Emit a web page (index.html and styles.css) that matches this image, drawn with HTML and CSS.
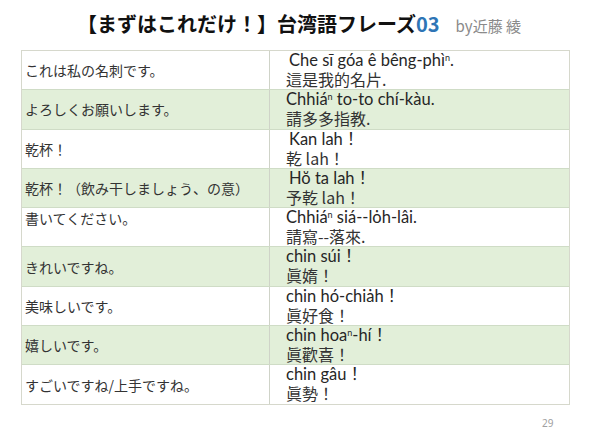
FILE: index.html
```html
<!DOCTYPE html>
<html lang="ja">
<head>
<meta charset="utf-8">
<title>台湾語フレーズ03</title>
<link rel="stylesheet" href="styles.css">
</head>
<body>
<div class="page">
  <header class="head">
    <h1 class="title">【まずはこれだけ！】台湾語フレーズ<span class="num">03</span></h1>
    <span class="by">by近藤 綾</span>
  </header>
  <div class="table">
    <div class="row">
      <div class="ja">これは私の名刺です。</div>
      <div class="tw"><span class="l1 ind">Che sī góa ê bêng-phì<span class="sup">n</span>.</span><span class="l2">這是我的名片.</span></div>
    </div>
    <div class="row green">
      <div class="ja">よろしくお願いします。</div>
      <div class="tw"><span class="l1">Chhiá<span class="sup">n</span> to-to chí-kàu.</span><span class="l2">請多多指教.</span></div>
    </div>
    <div class="row">
      <div class="ja">乾杯！</div>
      <div class="tw"><span class="l1 ind">Kan lah！</span><span class="l2">乾 lah！</span></div>
    </div>
    <div class="row green">
      <div class="ja">乾杯！（飲み干しましょう、の意）</div>
      <div class="tw"><span class="l1 ind">Hŏ ta lah！</span><span class="l2">予乾 lah！</span></div>
    </div>
    <div class="row">
      <div class="ja top">書いてください。</div>
      <div class="tw"><span class="l1">Chhiá<span class="sup">n</span> siá--lȯh-lâi.</span><span class="l2">請寫--落來.</span></div>
    </div>
    <div class="row green">
      <div class="ja">きれいですね。</div>
      <div class="tw"><span class="l1">chin súi！</span><span class="l2">眞媠！</span></div>
    </div>
    <div class="row">
      <div class="ja">美味しいです。</div>
      <div class="tw"><span class="l1">chin hó-chiȧh！</span><span class="l2">眞好食！</span></div>
    </div>
    <div class="row green">
      <div class="ja">嬉しいです。</div>
      <div class="tw"><span class="l1">chin hoa<span class="sup">n</span>-hí！</span><span class="l2">眞歡喜！</span></div>
    </div>
    <div class="row">
      <div class="ja">すごいですね/上手ですね。</div>
      <div class="tw"><span class="l1">chin gâu！</span><span class="l2">眞勢！</span></div>
    </div>
  </div>
  <div class="pageno">29</div>
</div>
</body>
</html>
```

FILE: styles.css
```css
* { box-sizing: border-box; }
html, body { margin: 0; padding: 0; background: #fff; }
.page {
  width: 590px;
  height: 442px;
  display: flex;
  flex-direction: column;
  font-family: "Noto Sans CJK JP", "Noto Sans", sans-serif;
}
.head {
  height: 50px;
  display: flex;
  align-items: center;
  justify-content: center;
  gap: 16px;
  padding: 0 0 2px 8px;
}
.title {
  margin: 0;
  font-size: 20px;
  font-weight: 700;
  color: #111;
  line-height: 1;
}
.num { color: #2e75b6; }
.by {
  font-size: 15px;
  color: #8a8a8a;
  line-height: 1;
  padding-top: 3px;
}
.table {
  margin-left: 21px;
  width: 549px;
  border: 1px solid #d6d8cc;
  border-bottom: none;
}
.row {
  display: grid;
  grid-template-columns: 248px 1fr;
  height: 39.3px;
  border-bottom: 1px solid #cfdcc6;
}
.row:last-child { border-bottom: 1px solid #d6d8cc; }
.green { background: #e2efd9; }
.ja {
  border-right: 1px solid #cfd3c8;
  display: flex;
  align-items: center;
  padding-left: 3px;
  font-size: 14px;
  color: #333;
  font-family: "Noto Sans CJK JP", sans-serif;
}
.ja.top { align-items: flex-start; padding-top: 0; }
.tw {
  display: flex;
  flex-direction: column;
  padding-left: 16px;
  font-size: 16.5px;
  color: #262626;
  line-height: 19px;
  font-family: "Lato", "Noto Sans", "Noto Sans CJK TC", sans-serif;
}
.l1, .l2 { display: block; height: 19px; white-space: nowrap; }
.l2 { font-family: "Noto Sans CJK TC", sans-serif; font-size: 16px; color: #333; }
.sup {
  font-size: 9px;
  vertical-align: top;
  line-height: 12px;
  position: relative;
  top: 1px;
}
.ind { padding-left: 3px; }
.pageno {
  margin-top: 11px;
  padding-left: 542px;
  font-size: 10px;
  color: #a0a0a0;
  font-family: "Noto Sans", sans-serif;
}
```
